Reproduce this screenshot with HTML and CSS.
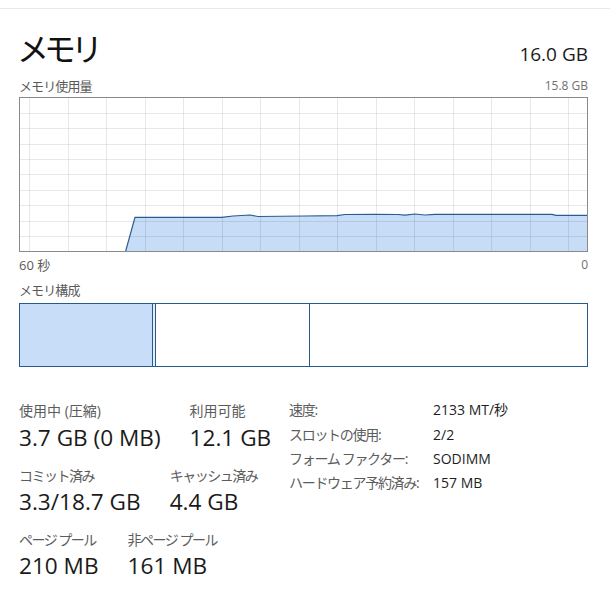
FILE: index.html
```html
<!DOCTYPE html>
<html lang="ja">
<head>
<meta charset="utf-8">
<title>メモリ</title>
<link rel="stylesheet" href="styles.css">
</head>
<body>
<div class="window">
  <header class="head">
    <h1 class="title">メモリ</h1>
    <span class="total">16.0 GB</span>
  </header>
  <div class="axis axis-top"><span class="kana">メモリ使用量</span><span class="num">15.8 GB</span></div>
  <div class="graph">
    <svg class="graph-svg" width="567" height="153" viewBox="0 0 567 153">
      <polygon class="area" points="105.7,153 115,119.3 201.7,119.3 213,118 230,117 238,118.5 285,118 317,117.7 325,116.5 355,116.3 378,116.5 385,117.2 395,116 405,117 415,116.3 532,116.3 536,117.3 567,117.3 567,153"/>
      <g class="grid">
        <line x1="0" y1="15.5" x2="567" y2="15.5"/>
        <line x1="0" y1="30.5" x2="567" y2="30.5"/>
        <line x1="0" y1="46.5" x2="567" y2="46.5"/>
        <line x1="0" y1="61.5" x2="567" y2="61.5"/>
        <line x1="0" y1="76.5" x2="567" y2="76.5"/>
        <line x1="0" y1="92.5" x2="567" y2="92.5"/>
        <line x1="0" y1="107.5" x2="567" y2="107.5"/>
        <line x1="0" y1="123.5" x2="567" y2="123.5"/>
        <line x1="0" y1="138.5" x2="567" y2="138.5"/>
        <line x1="9.5" y1="0" x2="9.5" y2="153"/>
        <line x1="48.5" y1="0" x2="48.5" y2="153"/>
        <line x1="86.5" y1="0" x2="86.5" y2="153"/>
        <line x1="125.5" y1="0" x2="125.5" y2="153"/>
        <line x1="163.5" y1="0" x2="163.5" y2="153"/>
        <line x1="202.5" y1="0" x2="202.5" y2="153"/>
        <line x1="240.5" y1="0" x2="240.5" y2="153"/>
        <line x1="279.5" y1="0" x2="279.5" y2="153"/>
        <line x1="317.5" y1="0" x2="317.5" y2="153"/>
        <line x1="356.5" y1="0" x2="356.5" y2="153"/>
        <line x1="394.5" y1="0" x2="394.5" y2="153"/>
        <line x1="433.5" y1="0" x2="433.5" y2="153"/>
        <line x1="471.5" y1="0" x2="471.5" y2="153"/>
        <line x1="510.5" y1="0" x2="510.5" y2="153"/>
        <line x1="548.5" y1="0" x2="548.5" y2="153"/>
      </g>
      <polyline class="trace" points="105.7,153 115,119.3 201.7,119.3 213,118 230,117 238,118.5 285,118 317,117.7 325,116.5 355,116.3 378,116.5 385,117.2 395,116 405,117 415,116.3 532,116.3 536,117.3 567,117.3"/>
    </svg>
  </div>
  <div class="axis axis-bottom"><span>60 秒</span><span class="num">0</span></div>
  <div class="axis axis-comp"><span class="kana">メモリ構成</span></div>
  <div class="comp">
    <div class="seg seg-inuse"></div>
    <div class="seg seg-modified"></div>
    <div class="seg seg-standby"></div>
    <div class="seg seg-free"></div>
  </div>
  <section class="stats">
    <div class="stats-left">
      <div class="stat-row">
        <div class="stat"><div class="label">使用中 (圧縮)</div><div class="value">3.7 GB (0 MB)</div></div>
        <div class="stat"><div class="label">利用可能</div><div class="value">12.1 GB</div></div>
      </div>
      <div class="stat-row">
        <div class="stat"><div class="label kana">コミット済み</div><div class="value">3.3/18.7 GB</div></div>
        <div class="stat"><div class="label kana">キャッシュ済み</div><div class="value">4.4 GB</div></div>
      </div>
      <div class="stat-row">
        <div class="stat"><div class="label kana">ページ プール</div><div class="value">210 MB</div></div>
        <div class="stat"><div class="label kana">非ページ プール</div><div class="value">161 MB</div></div>
      </div>
    </div>
    <dl class="stats-right">
      <dt>速度:</dt><dd>2133 MT/秒</dd>
      <dt>スロットの使用:</dt><dd>2/2</dd>
      <dt>フォーム ファクター:</dt><dd>SODIMM</dd>
      <dt>ハードウェア予約済み:</dt><dd>157 MB</dd>
    </dl>
  </section>
</div>
</body>
</html>
```

FILE: styles.css
```css
html, body {
  margin: 0;
  padding: 0;
  background: #ffffff;
}

body {
  font-family: "Open Sans", "Noto Sans CJK JP", sans-serif;
  color: #1a1a1a;
}

.window {
  margin-top: 8px;
  border-top: 1px solid #e9e9e9;
  padding: 0 22px 0 19px;
}

.head {
  display: flex;
  justify-content: space-between;
  align-items: baseline;
  padding-top: 17.55px;
}

.title {
  margin: 0 0 0 -2px;
  font-family: "Noto Sans CJK JP", sans-serif;
  font-weight: 400;
  font-size: 32px;
  line-height: 40px;
  letter-spacing: -5px;
  color: #111111;
}

.total {
  font-size: 19px;
  line-height: 40px;
  color: #1a1a1a;
}

.axis {
  display: flex;
  justify-content: space-between;
  font-size: 13px;
  line-height: 16px;
  color: #5a5a5a;
}

.axis .kana {
  letter-spacing: -0.9px;
}

.axis .num {
  font-size: 12px;
  color: #707070;
}

.axis-top {
  margin-top: 4.6px;
}

.graph {
  margin-top: 3.3px;
  height: 155px;
  box-sizing: border-box;
  border: 1px solid #8a8a8a;
}

.graph-svg {
  display: block;
}

.area {
  fill: #c7dcf6;
}

.grid line {
  stroke: rgba(0, 0, 0, 0.09);
  stroke-width: 1;
}

.trace {
  fill: none;
  stroke: #285d93;
  stroke-width: 1.2;
}

.axis-bottom {
  margin-top: 4.5px;
}

.axis-comp {
  margin-top: 9.5px;
}

.comp {
  margin-top: 5px;
  height: 64px;
  box-sizing: border-box;
  border: 1px solid #285b8c;
  display: flex;
}

.seg-inuse {
  width: 132px;
  background: #c8ddf7;
}

.seg-modified {
  width: 2px;
  border-left: 1px solid #285b8c;
  border-right: 1px solid #285b8c;
  background: #e4eefa;
}

.seg-standby {
  width: 153px;
}

.seg-free {
  flex: 1;
  border-left: 1px solid #285b8c;
}

.stats {
  margin-top: 31px;
  display: flex;
  align-items: flex-start;
}

.stats-left {
  width: 270px;
  padding-top: 5px;
  display: flex;
  flex-direction: column;
  gap: 16px;
}

.stat-row {
  display: flex;
  gap: 29px;
}

.label {
  font-size: 14px;
  line-height: 16px;
  color: #5c5c5c;
  margin-bottom: 4.3px;
  white-space: nowrap;
}

.label.kana {
  letter-spacing: -1.5px;
}

.value {
  font-size: 22.6px;
  line-height: 28px;
  color: #1a1a1a;
  white-space: nowrap;
}

.stats-right {
  margin: 0;
  display: grid;
  grid-template-columns: 144px auto;
  font-size: 14px;
  line-height: 24.3px;
}

.stats-right dt {
  color: #5c5c5c;
  letter-spacing: -1.3px;
  white-space: nowrap;
}

.stats-right dd {
  margin: 0;
  color: #1e1e1e;
  white-space: nowrap;
}
```
